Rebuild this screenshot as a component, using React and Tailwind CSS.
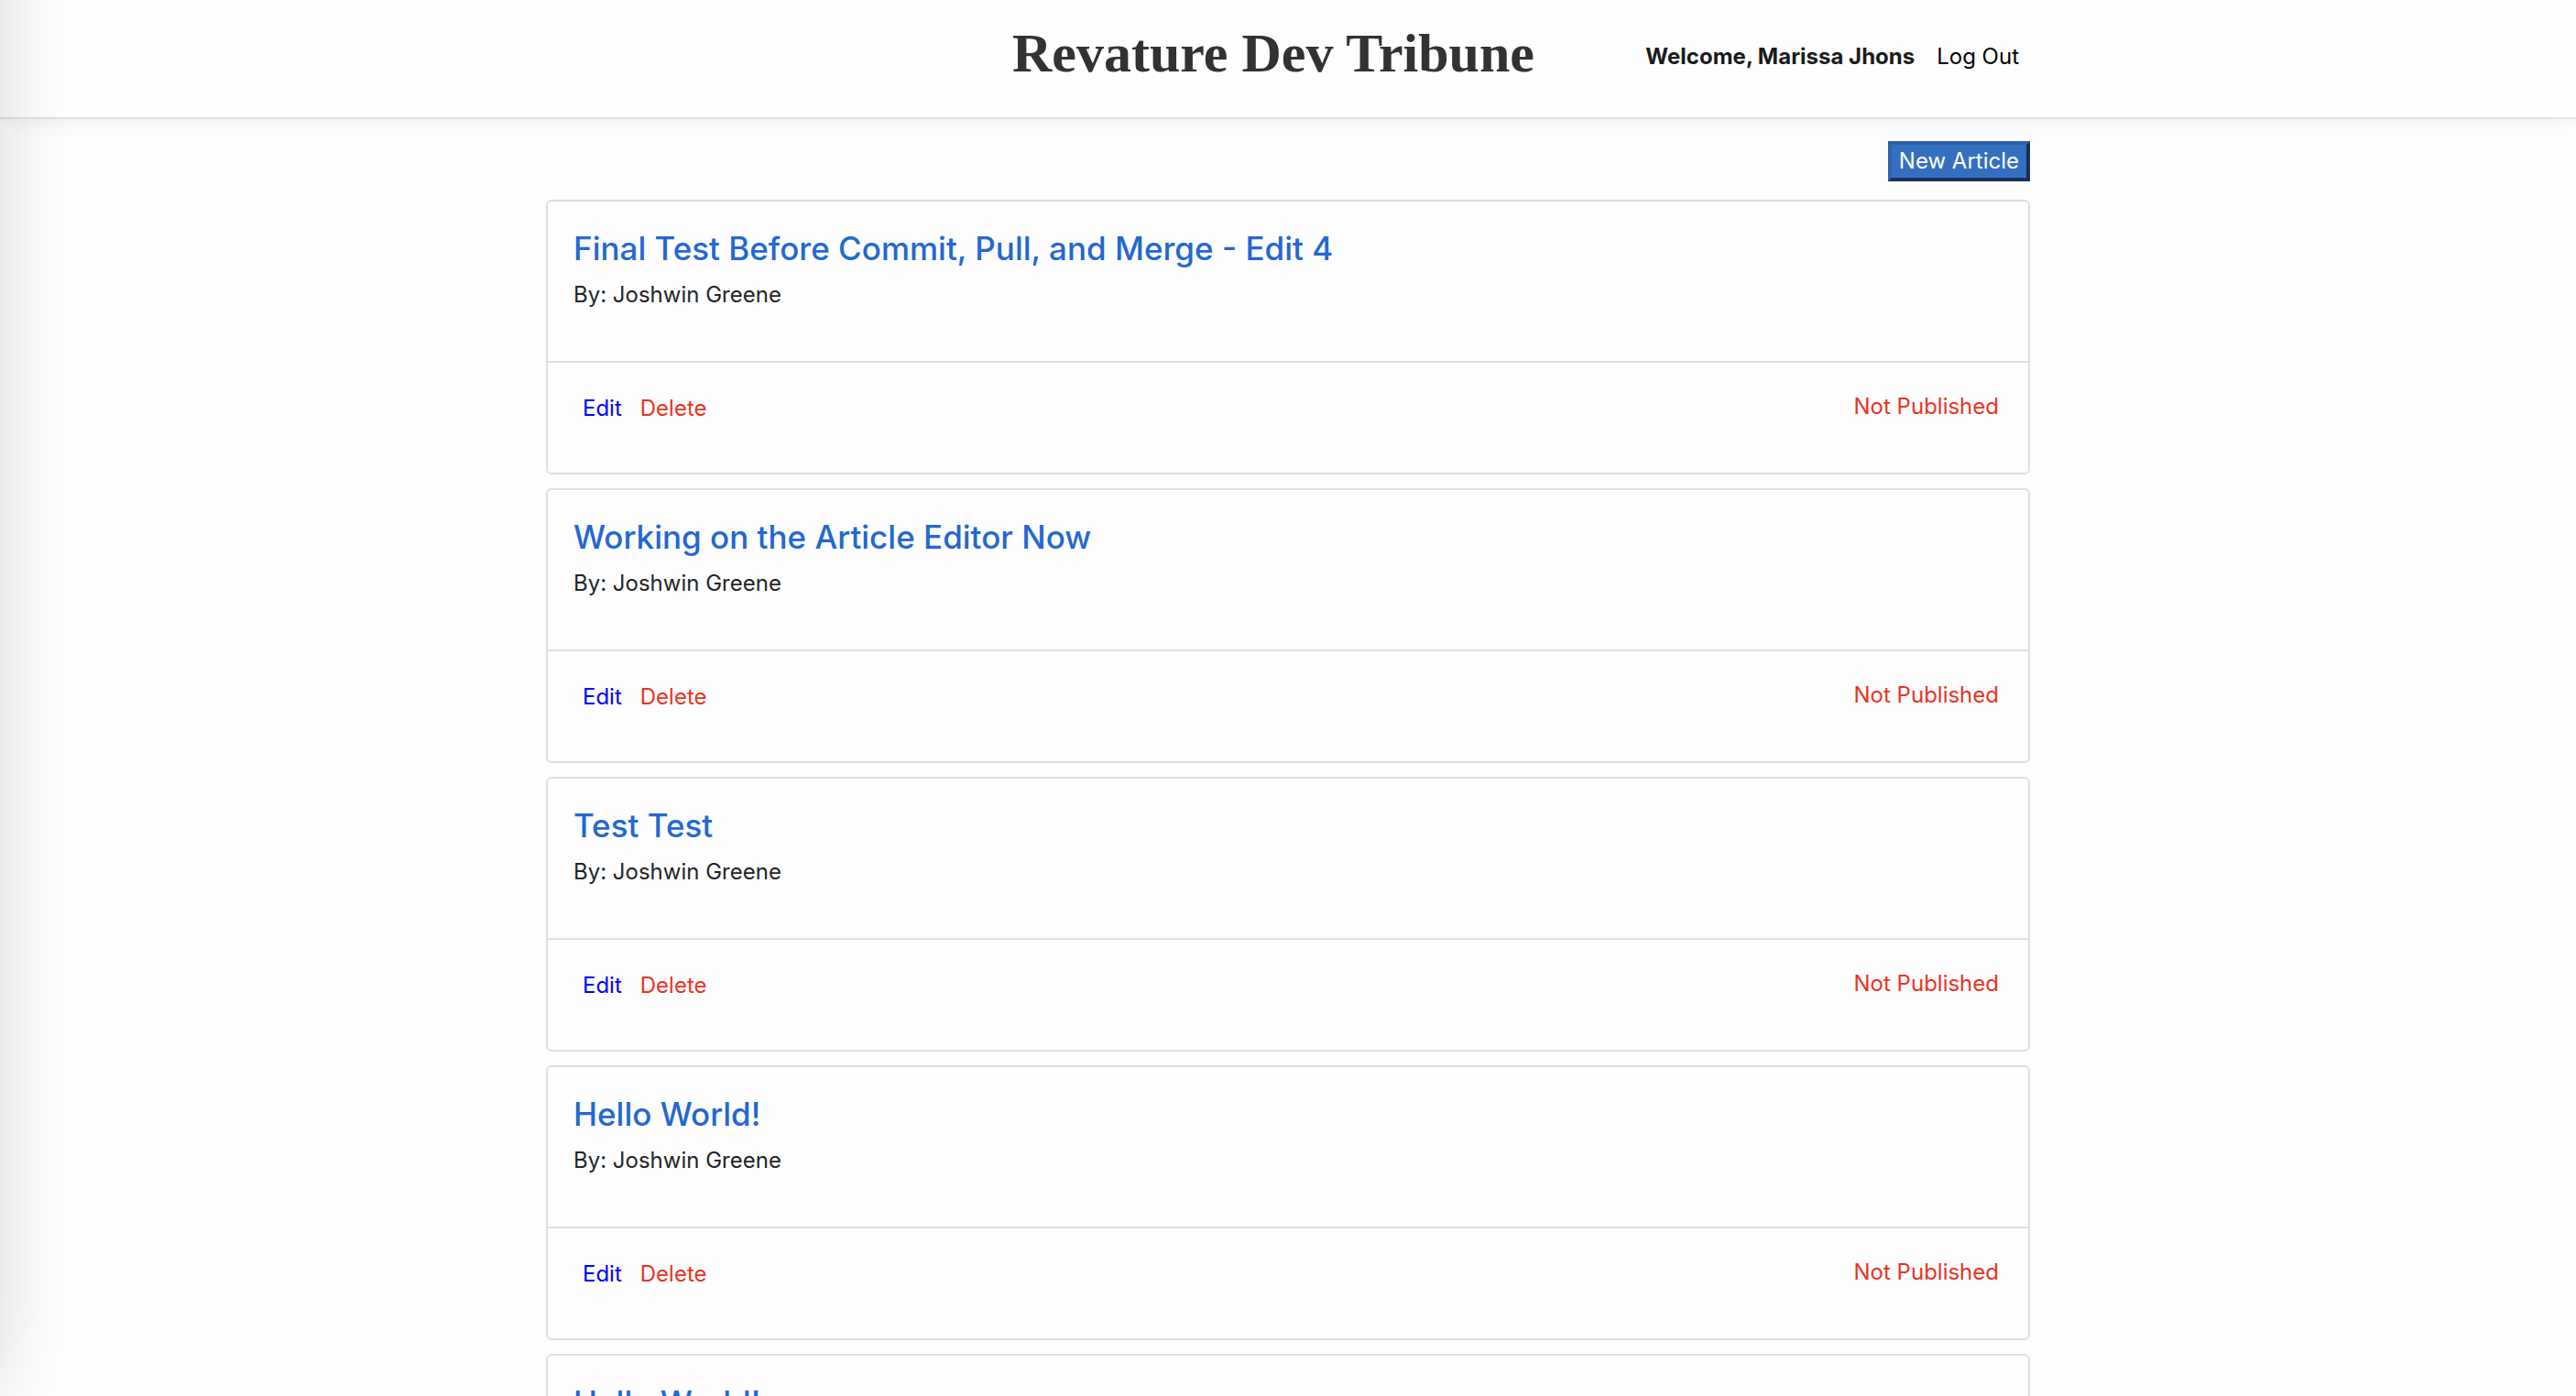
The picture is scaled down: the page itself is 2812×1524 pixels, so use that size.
const articles = [
  "Final Test Before Commit, Pull, and Merge - Edit 4",
  "Working on the Article Editor Now",
  "Test Test",
  "Hello World!",
  "Hello World!",
];

function Header() {
  return (
    <header className="relative z-10 border-b-2 border-[#dee2e6] bg-[#fefefe] shadow-[0_4px_24px_rgba(0,0,0,0.06)]">
      <div className="mx-auto grid h-32 w-full max-w-[1620px] grid-cols-[1fr_auto_1fr] items-start pt-6 pr-3">
        <span />
        <h1 className="mr-5 pt-1 font-['Liberation_Serif',serif] text-[60px] leading-[60px] font-bold whitespace-nowrap text-[#333132]">
          Revature Dev Tribune
        </h1>
        <nav className="flex items-center justify-end gap-6 pt-5 text-[24px] leading-9 whitespace-nowrap">
          <strong className="font-bold text-[#1b1b1b]">Welcome, Marissa Jhons</strong>
          <a href="#logout" className="text-black">Log Out</a>
        </nav>
      </div>
    </header>
  );
}

function ArticleCard({ title }) {
  return (
    <article className="rounded-md border-2 border-[#dfdfdf]">
      <div className="h-[174px] px-7 pt-7">
        <h2 className="text-[35px] leading-[46px] font-medium text-[#2467d1]">
          <a href="#article">{title}</a>
        </h2>
        <p className="mt-2.5 text-[24px] leading-9 text-[#212529]">By: Joshwin Greene</p>
      </div>
      <div className="flex h-[122px] items-start justify-between border-t-2 border-[#dfdfdf] px-8 pt-[30px] text-[24px] leading-9">
        <div className="flex gap-5 pt-0.5 pl-1.5">
          <button type="button" className="text-[#0000ff]">Edit</button>
          <button type="button" className="text-[#ea3323]">Delete</button>
        </div>
        <span className="text-[#ea3323]">Not Published</span>
      </div>
    </article>
  );
}

export default function App() {
  return (
    <div className="relative h-screen overflow-hidden bg-[#fefefe] font-['Inter',sans-serif]">
      <Header />
      <main className="mx-auto w-full max-w-[1620px] pt-6">
        <div className="flex justify-end">
          <button
            type="button"
            className="h-11 border-4 border-t-[#2c63a8] border-r-[#19305a] border-b-[#19305a] border-l-[#2c63a8] bg-[#346fc0] px-2 text-[24px] leading-9 text-white"
          >
            New Article
          </button>
        </div>
        <div className="mt-5 flex flex-col gap-[15px]">
          {articles.map((title, i) => (
            <ArticleCard key={i} title={title} />
          ))}
        </div>
      </main>
      <div className="pointer-events-none absolute -top-40 -left-50 bottom-0 z-20 w-48 shadow-[0_0_96px_rgba(0,0,0,0.17)]" />
    </div>
  );
}
